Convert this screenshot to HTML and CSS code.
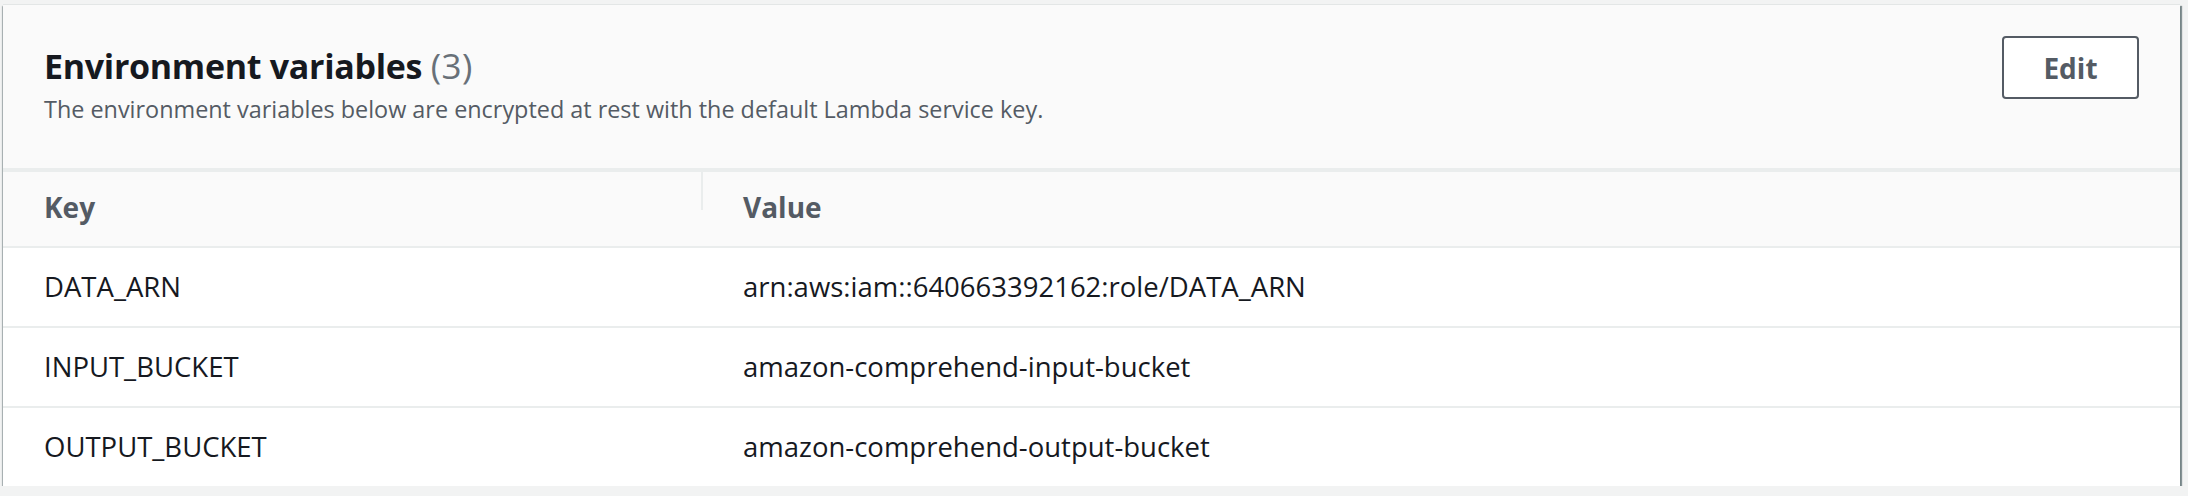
FILE: index.html
```html
<!DOCTYPE html>
<html lang="en">
<head>
<meta charset="utf-8">
<title>Environment variables</title>
<link rel="stylesheet" href="styles.css">
</head>
<body>
<section class="card">
  <header class="card-header">
    <div class="heading">
      <h2 class="title">Environment variables <span class="count">(3)</span></h2>
      <p class="desc">The environment variables below are encrypted at rest with the default Lambda service key.</p>
    </div>
    <button class="btn" type="button">Edit</button>
  </header>
  <div class="table">
    <div class="row head">
      <div class="cell key">Key</div>
      <div class="cell val">Value</div>
    </div>
    <div class="row">
      <div class="cell key">DATA_ARN</div>
      <div class="cell val">arn:aws:iam::640663392162:role/DATA_ARN</div>
    </div>
    <div class="row">
      <div class="cell key">INPUT_BUCKET</div>
      <div class="cell val">amazon-comprehend-input-bucket</div>
    </div>
    <div class="row">
      <div class="cell key">OUTPUT_BUCKET</div>
      <div class="cell val">amazon-comprehend-output-bucket</div>
    </div>
  </div>
</section>
</body>
</html>
```

FILE: styles.css
```css
* { box-sizing: border-box; }
html, body { margin: 0; padding: 0; }
body {
  background: #f2f3f3;
  font-family: "Open Sans", "Noto Sans", sans-serif;
  color: #16191f;
  padding: 5px 8px 0 3px;
}
.card {
  background: #ffffff;
  box-shadow: 0 2px 1px 0 rgba(0, 28, 36, 0.65), 2px 1px 1px 0 rgba(0, 28, 36, 0.45), -1px 1px 1px 0 rgba(0, 28, 36, 0.22), 0 -1px 0 0 rgba(0, 28, 36, 0.06);
}
.card-header {
  display: flex;
  justify-content: space-between;
  align-items: flex-start;
  background: #fafafa;
  padding: 31px 41px 43px 41px;
  border-bottom: 4px solid #eaeded;
}
.title {
  margin: 5px 0 0 0;
  font-size: 34px;
  letter-spacing: -0.3px;
  line-height: 50px;
  font-weight: 700;
  color: #16191f;
}
.count {
  font-weight: 400;
  font-size: 35px;
  letter-spacing: 0.5px;
  color: #687078;
}
.desc {
  margin: 2px 0 0 0;
  font-size: 23.4px;
  line-height: 32px;
  color: #545b64;
}
.btn {
  width: 137px;
  height: 63px;
  border: 2px solid #545b64;
  border-radius: 4px;
  background: #ffffff;
  color: #545b64;
  font-family: inherit;
  font-size: 28px;
  font-weight: 700;
  padding: 0;
  cursor: pointer;
}
.row {
  display: grid;
  grid-template-columns: 699px 1fr;
  border-bottom: 2px solid #eaeded;
}
.row:last-child { border-bottom: none; }
.cell {
  padding: 21px 41px;
  font-size: 27.5px;
  line-height: 36px;
}
.row.head {
  background: #fafafa;
}
.row.head .cell {
  padding: 17px 41px 21px 41px;
  font-size: 28px;
  font-weight: 700;
  color: #545b64;
}
.row.head .key {
  position: relative;
}
.row.head .key::after {
  content: "";
  position: absolute;
  right: -1px;
  top: 0;
  width: 2px;
  height: 38px;
  background: #eaeded;
}
```
